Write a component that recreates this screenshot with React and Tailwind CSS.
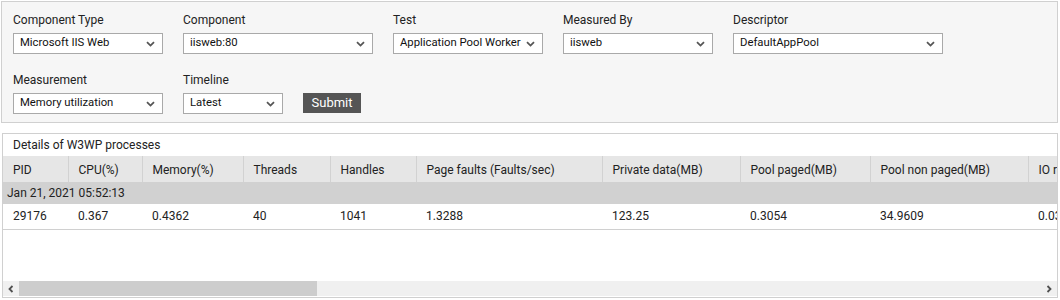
import React from 'react'

const font = { fontFamily: 'Roboto, "Liberation Sans", Arial, sans-serif' }

function Chevron() {
  return (
    <svg width="9" height="6" viewBox="0 0 9 6" className="shrink-0">
      <path d="M1 1.2 L4.5 4.6 L8 1.2" fill="none" stroke="#555" strokeWidth="1.8" />
    </svg>
  )
}

function Select({ label, value, width }) {
  return (
    <div className="flex flex-col">
      <label className="text-[12px] leading-4 text-[#222] mb-[5px]">{label}</label>
      <div
        className={`flex items-center justify-between h-[21px] bg-white border border-[#a9a9a9] pl-[6px] pr-[7px] text-[11.3px] text-[#111] ${width}`}
      >
        <span className="whitespace-nowrap">{value}</span>
        <Chevron />
      </div>
    </div>
  )
}

const columns = [
  { name: 'PID', w: 'w-[65px]', v: '29176' },
  { name: 'CPU(%)', w: 'w-[74px]', v: '0.367' },
  { name: 'Memory(%)', w: 'w-[101px]', v: '0.4362' },
  { name: 'Threads', w: 'w-[87px]', v: '40' },
  { name: 'Handles', w: 'w-[86px]', v: '1041' },
  { name: 'Page faults (Faults/sec)', w: 'w-[186px]', v: '1.3288' },
  { name: 'Private data(MB)', w: 'w-[138px]', v: '123.25' },
  { name: 'Pool paged(MB)', w: 'w-[130px]', v: '0.3054' },
  { name: 'Pool non paged(MB)', w: 'w-[158px]', v: '34.9609' },
  { name: 'IO read operations(Operations/sec)', w: 'w-[220px]', v: '0.0312' },
]

export default function App() {
  return (
    <div className="w-[1060px] h-[300px] bg-white overflow-hidden" style={font}>
      <div className="mt-px ml-px w-[1057px] h-[122px] border border-[#d0d0d0] bg-[#f6f6f6] pl-[11px] pt-[10px]">
        <div className="flex gap-5">
          <Select label="Component Type" value="Microsoft IIS Web" width="w-[150px]" />
          <Select label="Component" value="iisweb:80" width="w-[190px]" />
          <Select label="Test" value="Application Pool Worker" width="w-[150px]" />
          <Select label="Measured By" value="iisweb" width="w-[150px]" />
          <Select label="Descriptor" value="DefaultAppPool" width="w-[210px]" />
        </div>
        <div className="flex gap-5 items-end mt-[18px]">
          <Select label="Measurement" value="Memory utilization" width="w-[150px]" />
          <Select label="Timeline" value="Latest" width="w-[100px]" />
          <button className="h-[20px] mb-px w-[58px] bg-[#555555] text-white text-[13px] leading-5">
            Submit
          </button>
        </div>
      </div>

      <div className="mt-[10px] ml-[2px] w-[1056px] h-[165px] border border-[#d0d0d0] flex flex-col text-[12px] text-[#222]">
        <div className="h-[22px] leading-[22px] pl-[10px] bg-white">Details of W3WP processes</div>
        <div className="flex-1 overflow-hidden">
          <table className="table-fixed border-collapse w-max">
            <colgroup>
              {columns.map((c) => (
                <col key={c.name} className={c.w} />
              ))}
            </colgroup>
            <thead>
              <tr className="h-[26px] bg-[#e6e6e6]">
                {columns.map((c, i) => (
                  <th
                    key={c.name}
                    className={`font-normal text-left pl-[10px] pt-px whitespace-nowrap overflow-hidden ${i < columns.length - 1 ? 'border-r border-[#d2d2d2]' : ''}`}
                  >
                    {c.name}
                  </th>
                ))}
              </tr>
            </thead>
            <tbody>
              <tr className="h-[22px] bg-[#d1d1d1]">
                <td colSpan={columns.length} className="pl-[4px]">Jan 21, 2021 05:52:13</td>
              </tr>
              <tr className="h-[25px] border-b border-[#d0d0d0] bg-white">
                {columns.map((c) => (
                  <td key={c.name} className="pl-[10px] whitespace-nowrap overflow-hidden">
                    {c.v}
                  </td>
                ))}
              </tr>
            </tbody>
          </table>
        </div>
        <div className="h-[15px] flex bg-[#f0f0f0] mb-px">
          <div className="w-[16px] flex items-center justify-center">
            <svg width="6" height="8" viewBox="0 0 6 8">
              <path d="M4.5 1 L1.5 4 L4.5 7" fill="none" stroke="#505050" strokeWidth="1.8" />
            </svg>
          </div>
          <div className="w-[298px] bg-[#cdcdcd]" />
          <div className="flex-1" />
          <div className="w-[16px] flex items-center justify-center">
            <svg width="6" height="8" viewBox="0 0 6 8">
              <path d="M1.5 1 L4.5 4 L1.5 7" fill="none" stroke="#505050" strokeWidth="1.8" />
            </svg>
          </div>
        </div>
      </div>
    </div>
  )
}
